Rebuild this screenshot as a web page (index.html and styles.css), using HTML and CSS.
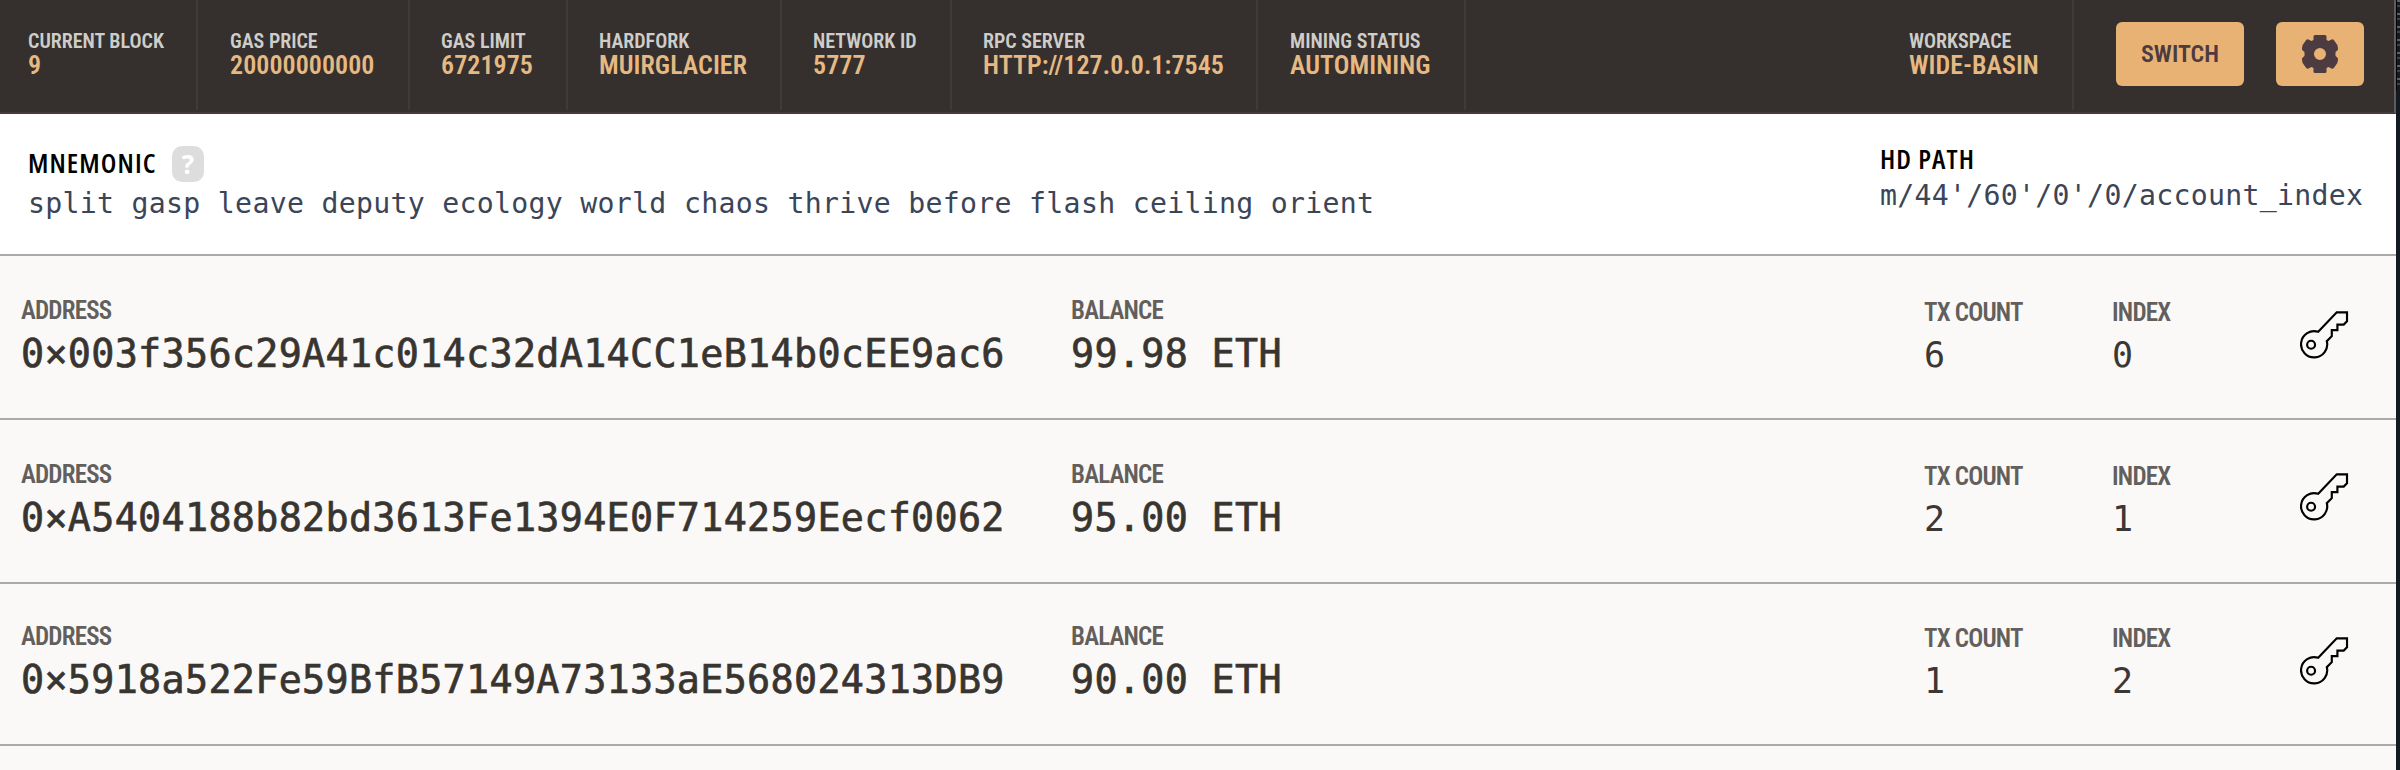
FILE: index.html
```html
<!DOCTYPE html>
<html lang="en">
<head>
<meta charset="utf-8">
<title>Accounts</title>
<link rel="stylesheet" href="styles.css">
</head>
<body>
<svg class="defs" width="0" height="0">
  <symbol id="key" viewBox="60 58 148 146">
    <path d="M115 123 L171 64 H202 V91 L192 101 H173 V118 H156 V136 L141 151 A39.5 39.5 0 1 1 115 123 Z" fill="none" stroke="#000" stroke-width="6.5"/>
    <circle cx="93.5" cy="162" r="12" fill="none" stroke="#000" stroke-width="6.5"/>
  </symbol>
</svg>
<div class="desktop">
<div class="window">
  <header class="bar">
    <div class="stat w1"><span class="k">CURRENT BLOCK</span><span class="v">9</span></div>
    <div class="stat w2"><span class="k">GAS PRICE</span><span class="v">20000000000</span></div>
    <div class="stat w3"><span class="k">GAS LIMIT</span><span class="v">6721975</span></div>
    <div class="stat w4"><span class="k">HARDFORK</span><span class="v">MUIRGLACIER</span></div>
    <div class="stat w5"><span class="k">NETWORK ID</span><span class="v">5777</span></div>
    <div class="stat w6"><span class="k">RPC SERVER</span><span class="v">HTTP://127.0.0.1:7545</span></div>
    <div class="stat w7"><span class="k">MINING STATUS</span><span class="v">AUTOMINING</span></div>
    <div class="stat w8"><span class="k">WORKSPACE</span><span class="v">WIDE-BASIN</span></div>
    <div class="actions">
      <button class="btn switch"><span>SWITCH</span></button>
      <button class="btn gear"><svg width="36" height="38" viewBox="0 0 36 38"><path fill="#4c3b40" fill-rule="evenodd" d="M13 0h10q1.500 0 1.500 1.500V5l2 1 3-1.500q1.500-.5 2.500.8l3.200 4.500q.8 2 .8 4.200 0 1.200-1 1.800L33.500 17v4l1.500 1.200q1 .6 1 1.800 0 2.200-.8 4.200L32 32.700q-1 1.300-2.500.8l-3-1.500-2 1v3.500q0 1.500-1.500 1.500H13q-1.500 0-1.500-1.500V33l-2-1-3 1.500q-1.500.5-2.500-.8L.8 28.200Q0 26.200 0 24q0-1.200 1-1.800L2.500 21v-4L1 15.800Q0 15.200 0 14q0-2.200.8-4.200L4 5.300q1-1.300 2.500-.8l3 1.500 2-1V1.500Q11.500 0 13 0zM18 13a6 6 0 1 0 0 12a6 6 0 1 0 0-12z"/></svg></button>
    </div>
  </header>
  <section class="seed">
    <div class="mnemonic">
      <div class="title"><span class="h">MNEMONIC</span><span class="help">?</span></div>
      <div class="mono">split gasp leave deputy ecology world chaos thrive before flash ceiling orient</div>
    </div>
    <div class="hd">
      <div class="title"><span class="h">HD PATH</span></div>
      <div class="mono">m/44'/60'/0'/0/account_index</div>
    </div>
  </section>
  <main>
    <div class="row">
      <div class="address"><span class="l">ADDRESS</span><span class="big">0×003f356c29A41c014c32dA14CC1eB14b0cEE9ac6</span></div>
      <div class="balance"><span class="l">BALANCE</span><span class="big">99.98 ETH</span></div>
      <div class="count"><span class="l">TX COUNT</span><span class="num">6</span></div>
      <div class="index"><span class="l">INDEX</span><span class="num">0</span></div>
      <svg class="key"><use href="#key"/></svg>
    </div>
    <div class="row second">
      <div class="address"><span class="l">ADDRESS</span><span class="big">0×A5404188b82bd3613Fe1394E0F714259Eecf0062</span></div>
      <div class="balance"><span class="l">BALANCE</span><span class="big">95.00 ETH</span></div>
      <div class="count"><span class="l">TX COUNT</span><span class="num">2</span></div>
      <div class="index"><span class="l">INDEX</span><span class="num">1</span></div>
      <svg class="key"><use href="#key"/></svg>
    </div>
    <div class="row third">
      <div class="address"><span class="l">ADDRESS</span><span class="big">0×5918a522Fe59BfB57149A73133aE568024313DB9</span></div>
      <div class="balance"><span class="l">BALANCE</span><span class="big">90.00 ETH</span></div>
      <div class="count"><span class="l">TX COUNT</span><span class="num">1</span></div>
      <div class="index"><span class="l">INDEX</span><span class="num">2</span></div>
      <svg class="key"><use href="#key"/></svg>
    </div>
  </main>
</div>
<div class="behind"></div>
</div>
</body>
</html>
```
FILE: styles.css
```css
* { box-sizing: border-box; }
body {
  margin: 0;
  height: 770px;
  overflow: hidden;
  background: #141a21;
  font-family: "Roboto Condensed", Roboto, sans-serif;
  font-stretch: 75%;
}
.defs { display: block; }
.desktop { display: flex; }
.behind {
  width: 4px;
  height: 90px;
  border-left: 1px solid #000;
  background: repeating-linear-gradient(#5b6067 0 2px, #141a21 2px 5px, #3d434b 5px 7px, #141a21 7px 13px);
}
.window {
  width: 2396px;
  height: 770px;
  background: #faf9f7;
}
.bar {
  height: 114px;
  display: flex;
  background: #35302d;
  border-right: 2px solid #605c5a;
  border-bottom: 2px solid #423b38;
}
.stat {
  height: 110px;
  padding: 29px 0 0 31px;
  border-right: 2px solid #3f3b38;
  white-space: nowrap;
}
.stat span, .row span { display: block; }
.k { font-size: 20px; line-height: 24px; font-weight: 600; color: #cfcdca; }
.v { font-size: 26px; line-height: 25px; font-weight: 600; letter-spacing: 0.05px; color: #e6b983; }
.w1 { width: 198px; padding-left: 28px; }
.w2 { width: 212px; padding-left: 32px; }
.w3 { width: 158px; }
.w4 { width: 214px; }
.w5 { width: 170px; }
.w6 { width: 306px; }
.w7 { width: 208px; padding-left: 32px; }
.w8 { width: 197px; margin-left: auto; padding-left: 32px; }
.actions { display: flex; gap: 32px; padding: 22px 30px 0 42px; }
.btn {
  height: 64px;
  border: 0;
  padding: 0;
  border-radius: 6px;
  background: #e8b274;
  color: #4c3b40;
  font: 600 24px/64px "Roboto Condensed", Roboto, sans-serif;
  font-stretch: 75%;
  display: flex;
  align-items: center;
  justify-content: center;
}
.switch { width: 128px; }
.gear { width: 88px; }
.seed {
  height: 142px;
  display: flex;
  justify-content: space-between;
  background: #fff;
  border-bottom: 2px solid #aaa;
  padding: 32px 32px 0 28px;
}
.hd { margin-top: -4px; width: 484px; }
.title { display: flex; align-items: center; height: 36px; }
.h { width: 144px; font: 600 27.5px/34px "Open Sans", sans-serif; color: #000; font-stretch: 75%; letter-spacing: 1.1px; height: 36px; }
.help {
  width: 32px;
  height: 36px;
  border-radius: 10px;
  background: #ddd;
  color: #fff;
  font: 700 26px/36px "Open Sans", sans-serif;
  text-align: center;
}
.mono {
  font: 28.2px/40px "DejaVu Sans Mono", monospace;
  letter-spacing: 0.29px;
  color: #3b4558;
  white-space: nowrap;
  padding-top: 2px;
}
.hd .mono { padding-top: 0; margin-top: -2px; }
.row {
  height: 164px;
  display: flex;
  border-bottom: 2px solid #aaa;
  padding: 41px 0 0 21px;
  white-space: nowrap;
}
.third { height: 162px; padding-top: 39px; }
.l { font-size: 25px; line-height: 28px; font-weight: 600; letter-spacing: -0.8px; color: #625f5c; }
.big { font: 38.4px/57px "DejaVu Sans Mono", monospace; letter-spacing: 0.31px; color: #383430; -webkit-text-stroke: 0.7px #383430; }
.num { font: 35px/56px "DejaVu Sans Mono", monospace; color: #3a3734; }
.address { width: 1050px; }
.balance { width: 853px; }
.count { width: 188px; padding-top: 2px; }
.index { width: 187px; padding-top: 2px; }
.key { width: 49px; height: 49px; margin: 13px 0 0 1px; }
.second .key { margin-top: 11px; }
```
